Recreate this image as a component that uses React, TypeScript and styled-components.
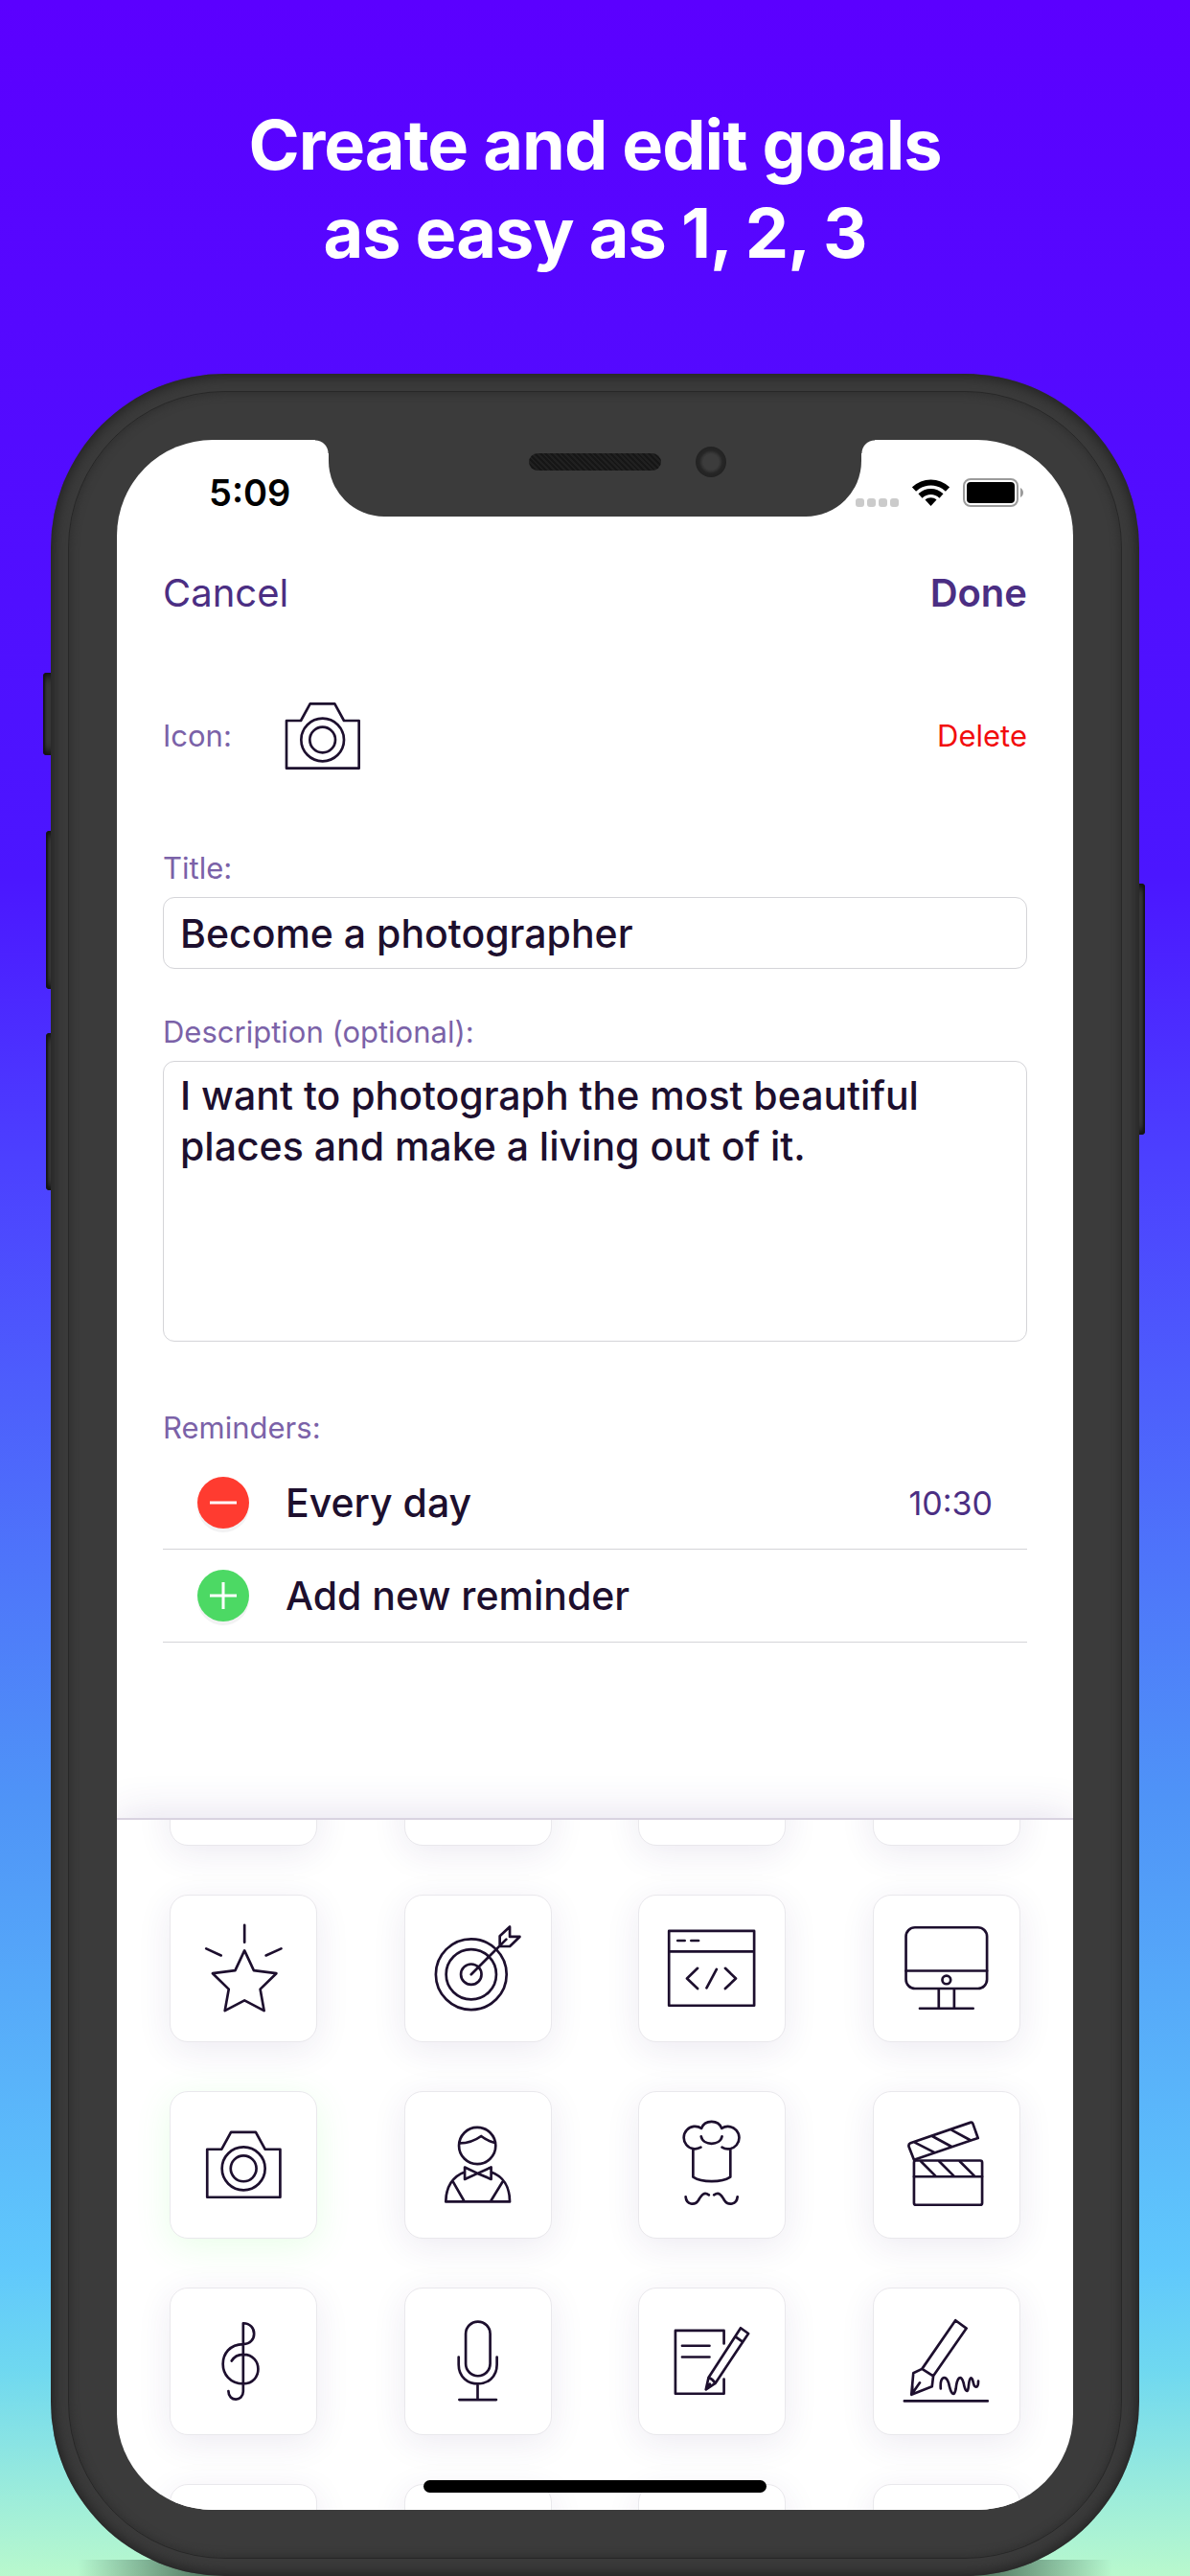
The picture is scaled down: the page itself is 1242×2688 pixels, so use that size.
import React, { useLayoutEffect, useRef, useState } from "react";
import styled, { createGlobalStyle } from "styled-components";

const GlobalStyle = createGlobalStyle`
  *, *::before, *::after { box-sizing: border-box; }
  body { margin: 0; font-family: Inter, "Noto Sans", sans-serif; }
  button, input, textarea { font: inherit; color: inherit; margin: 0; }
  button { background: none; border: 0; padding: 0; cursor: pointer; }
`;

const color = {
  ink: "#1d0f2e",
  purple: "#4b2e83",
  label: "#7b62a8",
  line: "#d4d4d8",
  body: "#3b3b3b",
};

const Page = styled.main`
  display: flex;
  flex-direction: column;
  padding: 105px 53px 0;
  overflow: hidden;
  background: linear-gradient(
    180deg,
    #5b00ff 0%,
    #4b16ff 34%,
    #4c40ff 45%,
    #4f94f7 70%,
    #60c8fc 88%,
    #6fd8f0 92%,
    #b9f9cd 100%
  );
`;

const Headline = styled.h1`
  margin: 0 0 101px;
  color: #fff;
  font-size: 72px;
  line-height: 92px;
  font-weight: 700;
  letter-spacing: -1px;
  text-align: center;
`;

const Phone = styled.div`
  position: relative;
  padding: 69px;
  border-radius: 182px;
  background: ${color.body};
  box-shadow: inset 0 0 14px 2px #1f1f1f;
`;

const Rim = styled.div`
  position: absolute;
  inset: 18px;
  border-radius: 164px;
  border: 1px solid #272727;
  box-shadow: inset 0 0 8px 2px #303030;
`;

const GroundShadow = styled.div`
  position: absolute;
  left: 28px;
  right: 28px;
  bottom: 0;
  height: 17px;
  background: linear-gradient(90deg, transparent, rgba(20, 40, 30, 0.6) 12%, rgba(20, 40, 30, 0.6) 88%, transparent);
`;

const PhoneWrap = styled.div`
  position: relative;
`;

const SideKey = styled.span<{ $side: "left" | "right"; $top: number; $height: number; $out: number }>`
  position: absolute;
  ${(p) => p.$side}: ${(p) => -p.$out}px;
  top: ${(p) => p.$top}px;
  width: 14px;
  height: ${(p) => p.$height}px;
  border-radius: 4px;
  background: #363636;
  box-shadow: inset ${(p) => (p.$side === "left" ? "2px" : "-2px")} 0 2px #151515, inset 0 10px 8px -6px #111,
    inset 0 -10px 8px -6px #111;
`;

const Screen = styled.div`
  position: relative;
  display: flex;
  flex-direction: column;
  overflow: hidden;
  border-radius: 100px;
  background: #fff;
  color: ${color.ink};
`;

const Notch = styled.div`
  position: absolute;
  top: 0;
  left: 50%;
  transform: translateX(-50%);
  width: 556px;
  height: 80px;
  border-radius: 0 0 58px 58px;
  background: ${color.body};

  &::before,
  &::after {
    content: "";
    position: absolute;
    top: 0;
    width: 14px;
    height: 14px;
  }
  &::before {
    right: 100%;
    background: radial-gradient(circle at 0 100%, transparent 13px, ${color.body} 14px);
  }
  &::after {
    left: 100%;
    background: radial-gradient(circle at 100% 100%, transparent 13px, ${color.body} 14px);
  }
`;

const Speaker = styled.span`
  position: absolute;
  top: 14px;
  left: 209px;
  width: 138px;
  height: 18px;
  border-radius: 9px;
  background: repeating-linear-gradient(45deg, #161616 0 2px, #202020 2px 4px);
`;

const Lens = styled.span`
  position: absolute;
  top: 7px;
  left: 383px;
  width: 32px;
  height: 32px;
  border-radius: 50%;
  background: radial-gradient(circle, #3c3c3c 0 8px, #333 10px, #262626 12px, #222 16px);
`;

const StatusBar = styled.div`
  display: flex;
  align-items: center;
  justify-content: space-between;
  height: 110px;
  padding: 0 51px 0 96px;
  color: #000;
  font-size: 38px;
  font-weight: 600;
`;

const StatusIcons = styled.div`
  display: flex;
  align-items: center;
  gap: 14px;
`;

const SignalDots = styled.span`
  display: flex;
  align-self: flex-end;
  gap: 3px;

  i {
    width: 9px;
    height: 9px;
    border-radius: 3px;
    background: #cbcbcb;
  }
`;

const NavBar = styled.nav`
  display: flex;
  align-items: center;
  justify-content: space-between;
  margin-top: 18px;
  height: 64px;
  padding: 0 48px;
`;

const NavButton = styled.button<{ $strong?: boolean }>`
  color: ${color.purple};
  font-size: 40px;
  line-height: 64px;
  font-weight: ${(p) => (p.$strong ? 600 : 400)};
`;

const Form = styled.form`
  display: flex;
  flex-direction: column;
  padding: 0 48px 183px;
`;

const IconRow = styled.div`
  display: flex;
  align-items: center;
  height: 72px;
  margin: 81px 0 84px;
`;

const Label = styled.label`
  color: ${color.label};
  font-size: 31px;
  line-height: 36px;
`;

const IconLabel = styled(Label)`
  width: 127px;
`;

const DeleteButton = styled.button`
  margin-left: auto;
  color: #f20d0d;
  font-size: 31px;
  line-height: 36px;
`;

const Field = styled.div<{ $gap: number }>`
  display: flex;
  flex-direction: column;
  gap: 12px;
  margin-bottom: ${(p) => p.$gap}px;
`;

const TextInput = styled.input`
  height: 75px;
  padding: 0 17px;
  border: 1px solid ${color.line};
  border-radius: 12px;
  background: #fff;
  font-size: 41px;
  font-weight: 500;
  outline: 0;
`;

const TextArea = styled.textarea`
  display: block;
  height: 293px;
  padding: 9px 17px;
  border: 1px solid ${color.line};
  border-radius: 12px;
  background: #fff;
  font-size: 41px;
  font-weight: 500;
  line-height: 53px;
  resize: none;
  outline: 0;
`;

const Reminders = styled.ul`
  list-style: none;
  margin: 0;
  padding: 0;
`;

const Reminder = styled.li`
  display: flex;
  align-items: center;
  height: 97px;
  padding: 0 36px;
  gap: 38px;
  border-bottom: 1px solid ${color.line};
  font-size: 41px;
  font-weight: 500;
`;

const RoundButton = styled.button<{ $color: string }>`
  display: flex;
  width: 54px;
  height: 54px;
  border-radius: 50%;
  background: ${(p) => p.$color};
  box-shadow: 0 4px 0 #f2f2f3;
`;

const TimeButton = styled.button`
  margin-left: auto;
  color: ${color.purple};
  font-size: 34px;
  font-weight: 400;
`;

const Picker = styled.section`
  height: 722px;
  padding: 0 55px;
  overflow-y: scroll;
  scrollbar-width: none;
  border-top: 2px solid #d9d3e0;
  box-shadow: 0 0 44px rgba(75, 46, 131, 0.16);
`;

const IconGrid = styled.div`
  display: grid;
  grid-template-columns: repeat(4, 154px);
  justify-content: space-between;
  row-gap: 51px;
  padding-bottom: 51px;
`;

const IconCard = styled.button<{ $active: boolean }>`
  display: flex;
  height: 154px;
  border: 1px solid #e9e8ec;
  border-radius: 19px;
  background: #fff;
  box-shadow: 0 8px 36px ${(p) => (p.$active ? "rgba(90, 255, 90, 0.14)" : "rgba(60, 35, 110, 0.09)")};
`;

const Glyph = styled.svg`
  width: 100%;
  height: 100%;
  fill: none;
  stroke: ${color.ink};
  stroke-width: 8;
  stroke-linecap: round;
  stroke-linejoin: round;
`;

const CurrentIcon = styled.svg`
  width: 80px;
  height: 72px;
  fill: none;
  stroke: ${color.ink};
  stroke-width: 8;
  stroke-linejoin: round;
`;

const HomeBar = styled.span`
  position: absolute;
  left: 50%;
  bottom: 18px;
  transform: translateX(-50%);
  width: 358px;
  height: 13px;
  border-radius: 7px;
  background: #000;
`;

const cameraShape = (
  <>
    <path d="M201 908H246L275 855H352L381 908H428V1057H201Z" />
    <circle cx="314" cy="968" r="67" />
    <circle cx="314" cy="968" r="40" />
  </>
);

type IconDef = { name: string; box: string; art: React.ReactNode };

const icons: IconDef[] = [
  { name: "Travel", box: "3 3 453 453", art: null },
  { name: "Home", box: "3 3 453 453", art: null },
  { name: "Music", box: "3 3 453 453", art: null },
  { name: "Sport", box: "3 3 453 453", art: null },
  {
    name: "Star",
    box: "87 115 453 453",
    art: (
      <path d="M317 207V260M198 280L244 301M431 280L384 301M317 286L346 348L416 357L366 406L378 473L317 441L256 473L268 406L218 357L288 348Z" />
    ),
  },
  {
    name: "Target",
    box: "822 115 453 453",
    art: (
      <>
        <circle cx="1027" cy="360" r="110" />
        <circle cx="1027" cy="360" r="78" />
        <circle cx="1027" cy="360" r="32" />
        <path d="M1027 360L1136 251M1116 273V241L1147 212V243H1178L1147 273Z" />
      </>
    ),
  },
  {
    name: "Code",
    box: "85 115 453 453",
    art: (
      <path d="M178 225H443V457H178ZM178 289H443M205 255H227M247 255H270M267 341L234 373L267 404M326 344L295 402M353 341L386 373L353 404" />
    ),
  },
  {
    name: "Computer",
    box: "818 115 453 453",
    art: (
      <>
        <rect x="918" y="214" width="252" height="190" rx="28" />
        <circle cx="1044" cy="377" r="13" />
        <path d="M918 349H1170M1020 405V466M1068 405V466M961 466H1127" />
      </>
    ),
  },
  { name: "Camera", box: "87 730 453 453", art: cameraShape },
  {
    name: "Waiter",
    box: "822 730 453 453",
    art: (
      <>
        <circle cx="1046" cy="897" r="57" />
        <path d="M991 889C1018 889 1036 883 1058 867C1074 879 1086 884 1101 888M1007 964L1047 983L1089 964V1001L1047 983L1007 1001ZM1007 979C970 992 948 1025 948 1071H1147C1147 1025 1126 992 1089 979M971 1010L1005 1069M1124 1010L1088 1069" />
      </>
    ),
  },
  {
    name: "Chef",
    box: "85 730 453 453",
    art: (
      <path d="M253 908V994C280 1012 342 1012 369 994V908M277 902A35 35 0 1 1 279 843C289 815 332 815 342 843A35 35 0 1 1 343 902M278 868C284 898 337 898 343 868M230 1056C232 1080 258 1085 270 1066C280 1048 288 1040 302 1050M391 1056C389 1080 362 1085 350 1066C340 1048 333 1040 318 1050" />
    ),
  },
  {
    name: "Movie",
    box: "818 730 453 453",
    art: (
      <>
        <rect x="943" y="943" width="212" height="138" rx="6" />
        <path d="M943 993H1155M965 946L1010 991M1022 946L1067 991M1086 946L1131 991M943 941L927 900Q925 892 932 889L1118 825Q1124 823 1126 828L1142 873ZM944 886L1007 918M1001 868L1060 900M1060 848L1117 879" />
      </>
    ),
  },
  {
    name: "Clef",
    box: "87 85 453 453",
    art: (
      <path d="M277 310C284 298 298 290 313 290C375 290 375 381 313 381C229 381 229 258 313 258C358 258 358 193 313 193V405C313 438 267 438 267 404" />
    ),
  },
  {
    name: "Microphone",
    box: "822 85 453 453",
    art: (
      <>
        <rect x="1010" y="188" width="76" height="169" rx="38" />
        <path d="M988 298V322C988 401 1107 401 1107 322V298M1047 382V431M990 431H1105" />
      </>
    ),
  },
  {
    name: "Notes",
    box: "3 3 453 453",
    art: (
      <path d="M267 174V134H116V330H267V285M137 181H222M137 216H222M319 126L343 143L240 298L211 317L219 280ZM303 153L324 168M219 280C228 283 236 290 240 298M211 317L223 300" />
    ),
  },
  {
    name: "Writing",
    box: "3 3 453 453",
    art: (
      <path d="M98 353H357M257 102L291 127L188 275L153 253ZM153 253L126 266L120 333L184 308L188 275M146 296L120 333M123 306V330M211 314C208 275 228 270 236 298C243 332 253 342 258 316C262 276 275 270 282 296C287 324 296 332 298 304C301 276 308 276 312 294C316 314 328 314 328 291" />
    ),
  },
  { name: "Book", box: "3 3 453 453", art: null },
  { name: "Heart", box: "3 3 453 453", art: null },
  { name: "Money", box: "3 3 453 453", art: null },
  { name: "Plane", box: "3 3 453 453", art: null },
];

function WifiIcon() {
  return (
    <svg width="39" height="28" viewBox="0 0 39 28" aria-hidden="true">
      <g fill="none" stroke="#000" strokeWidth="6">
        <path d="M2 10.5C12 1 27 1 37 10.5" />
        <path d="M8.500 17.500C15 11.500 24 11.500 30.500 17.500" />
      </g>
      <path d="M19.500 28L13.500 21.500C17 18.500 22 18.500 25.500 21.500Z" />
    </svg>
  );
}

function BatteryIcon() {
  return (
    <svg width="64" height="30" viewBox="0 0 64 30" aria-hidden="true">
      <rect x="1" y="1" width="56" height="28" rx="7" fill="none" stroke="#9b9b9b" strokeWidth="2" />
      <rect x="4" y="4" width="50" height="22" rx="4" />
      <path d="M60 10C64 12 64 18 60 20Z" fill="#9b9b9b" />
    </svg>
  );
}

export default function App() {
  const [title, setTitle] = useState("Become a photographer");
  const [description, setDescription] = useState(
    "I want to photograph the most beautiful places and make a living out of it."
  );
  const [selected, setSelected] = useState("Camera");
  const pickerRef = useRef<HTMLElement>(null);

  useLayoutEffect(() => {
    if (pickerRef.current) pickerRef.current.scrollTop = 127;
  }, []);

  const current = icons.find((icon) => icon.name === selected);

  return (
    <Page>
      <GlobalStyle />
      <Headline>
        Create and edit goals
        <br />
        as easy as 1, 2, 3
      </Headline>
      <PhoneWrap>
        <GroundShadow />
        <SideKey $side="left" $top={312} $height={86} $out={8} />
        <SideKey $side="left" $top={477} $height={165} $out={5} />
        <SideKey $side="left" $top={688} $height={164} $out={5} />
        <SideKey $side="right" $top={532} $height={262} $out={6} />
        <Phone>
          <Rim />
          <Screen>
            <StatusBar>
              <span>5:09</span>
              <StatusIcons>
                <SignalDots>
                  <i />
                  <i />
                  <i />
                  <i />
                </SignalDots>
                <WifiIcon />
                <BatteryIcon />
              </StatusIcons>
            </StatusBar>
            <Notch>
              <Speaker />
              <Lens />
            </Notch>
            <NavBar>
              <NavButton type="button">Cancel</NavButton>
              <NavButton type="button" $strong>
                Done
              </NavButton>
            </NavBar>
            <Form onSubmit={(e) => e.preventDefault()}>
              <IconRow>
                <IconLabel as="span">Icon:</IconLabel>
                {selected === "Camera" ? (
                  <CurrentIcon viewBox="195 850 240 212" aria-label="Camera">
                    {cameraShape}
                  </CurrentIcon>
                ) : (
                  <CurrentIcon viewBox={current?.box}>{current?.art}</CurrentIcon>
                )}
                <DeleteButton type="button">Delete</DeleteButton>
              </IconRow>
              <Field $gap={48}>
                <Label htmlFor="title">Title:</Label>
                <TextInput id="title" value={title} onChange={(e) => setTitle(e.target.value)} />
              </Field>
              <Field $gap={72}>
                <Label htmlFor="description">Description (optional):</Label>
                <TextArea
                  id="description"
                  spellCheck={false}
                  value={description}
                  onChange={(e) => setDescription(e.target.value)}
                />
              </Field>
              <Field $gap={0}>
                <Label as="span">Reminders:</Label>
                <Reminders>
                  <Reminder>
                    <RoundButton type="button" $color="#ff3b30" aria-label="Remove reminder">
                      <svg width="54" height="54" viewBox="0 0 54 54" stroke="#fff" strokeWidth="3">
                        <path d="M13 27H41" />
                      </svg>
                    </RoundButton>
                    <span>Every day</span>
                    <TimeButton type="button">10:30</TimeButton>
                  </Reminder>
                  <Reminder>
                    <RoundButton type="button" $color="#4cd964" aria-label="Add reminder">
                      <svg width="54" height="54" viewBox="0 0 54 54" stroke="#fff" strokeWidth="3">
                        <path d="M13 27H41M27 13V41" />
                      </svg>
                    </RoundButton>
                    <span>Add new reminder</span>
                  </Reminder>
                </Reminders>
              </Field>
            </Form>
            <Picker ref={pickerRef} aria-label="Icons">
              <IconGrid>
                {icons.map((icon) => (
                  <IconCard
                    key={icon.name}
                    type="button"
                    aria-label={icon.name}
                    $active={icon.name === selected}
                    onClick={() => setSelected(icon.name)}
                  >
                    <Glyph viewBox={icon.box}>{icon.art}</Glyph>
                  </IconCard>
                ))}
              </IconGrid>
            </Picker>
            <HomeBar />
          </Screen>
        </Phone>
      </PhoneWrap>
    </Page>
  );
}
